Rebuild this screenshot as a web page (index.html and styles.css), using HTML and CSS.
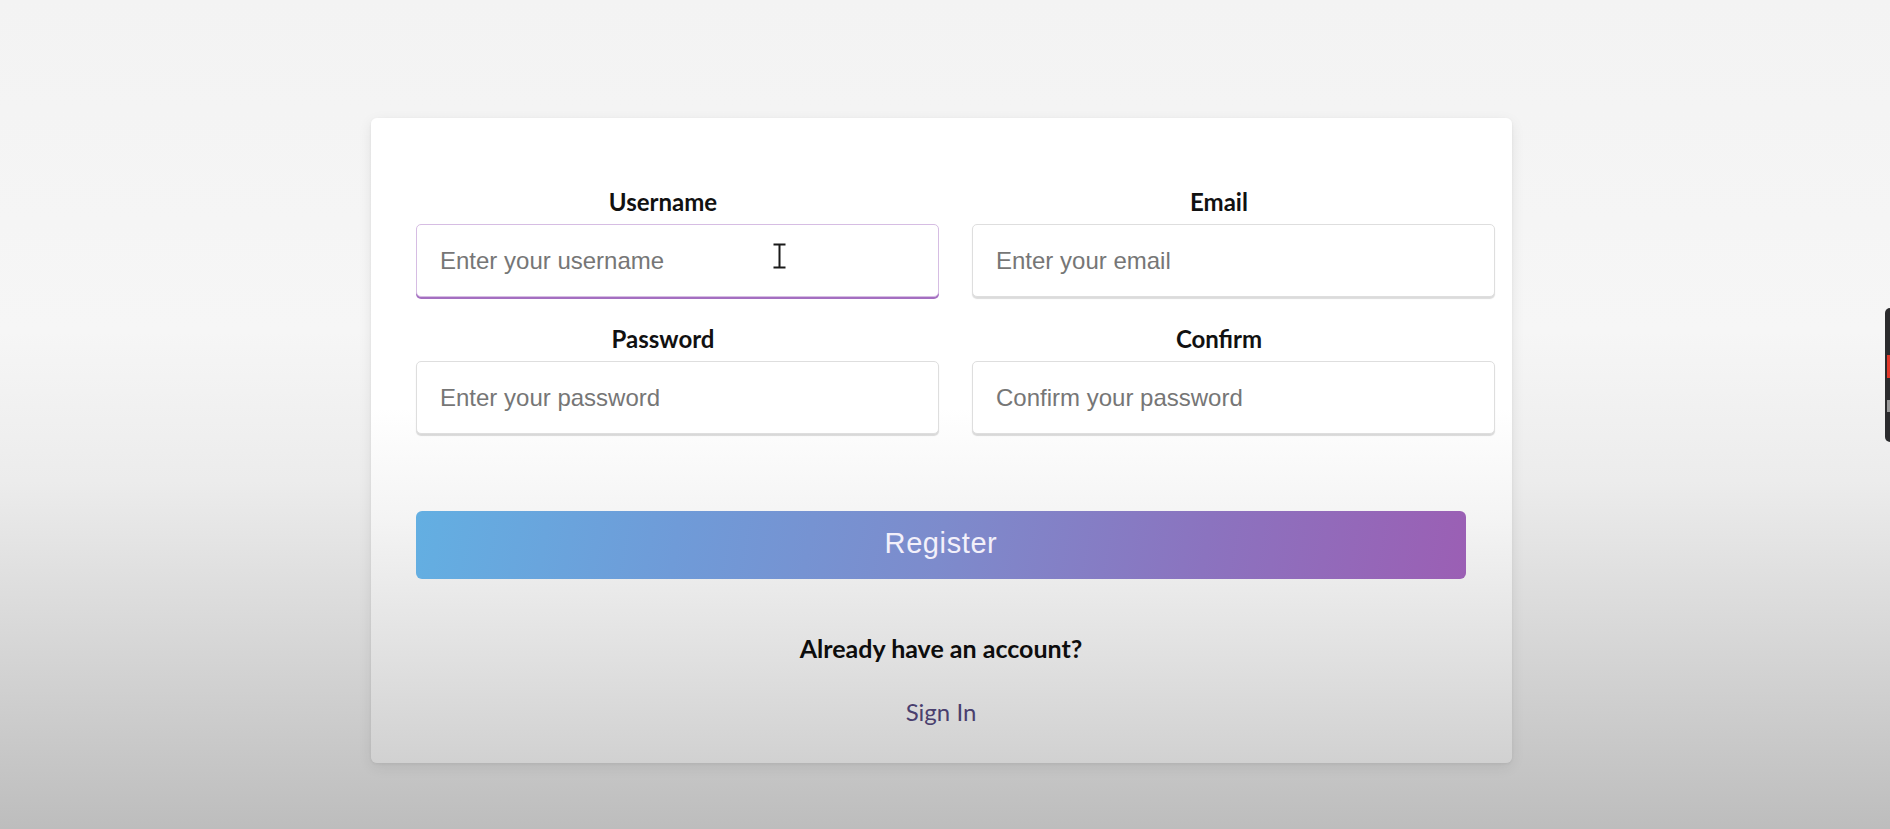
FILE: index.html
```html
<!DOCTYPE html>
<html lang="en">
<head>
<meta charset="utf-8">
<title>Register</title>
<link rel="stylesheet" href="styles.css">
</head>
<body>
<main class="page">
  <form class="card">
    <div class="grid">
      <div class="field">
        <label class="label" for="username">Username</label>
        <div class="control">
          <input id="username" class="input input-focus" type="text" placeholder="Enter your username">
          <svg class="ibeam" width="15" height="26" viewBox="0 0 15 26" aria-hidden="true">
            <path d="M1.5 1.5 H13.5 M1.5 24.5 H13.5 M7.5 1.5 V24.5" fill="none" stroke="#1a1a1a" stroke-width="2"/>
          </svg>
        </div>
      </div>
      <div class="field">
        <label class="label" for="email">Email</label>
        <div class="control">
          <input id="email" class="input" type="email" placeholder="Enter your email">
        </div>
      </div>
      <div class="field">
        <label class="label" for="password">Password</label>
        <div class="control">
          <input id="password" class="input" type="password" placeholder="Enter your password">
        </div>
      </div>
      <div class="field">
        <label class="label" for="confirm">Confirm</label>
        <div class="control">
          <input id="confirm" class="input" type="password" placeholder="Confirm your password">
        </div>
      </div>
    </div>
    <button class="register" type="button">Register</button>
    <p class="already">Already have an account?</p>
    <a class="signin" href="#">Sign In</a>
  </form>
</main>
<div class="edge-device"><span class="edge-red"></span><span class="edge-gray"></span></div>
</body>
</html>
```

FILE: styles.css
```css
html, body {
  margin: 0;
  padding: 0;
  height: 100%;
}

body {
  background: linear-gradient(to bottom, #f3f3f3 0%, #f6f6f6 40%, #ececec 58%, #d6d6d6 78%, #bdbdbd 100%);
  font-family: "Lato", "Open Sans", sans-serif;
  overflow: hidden;
}

.page {
  display: flex;
  justify-content: center;
  padding: 118px 7px 0 0;
}

.card {
  width: 1141px;
  box-sizing: border-box;
  padding: 69px 46px 36px 45px;
  border-radius: 6px;
  background: linear-gradient(to bottom, #ffffff 0%, #ffffff 45%, #f4f4f4 62%, #e2e2e2 82%, #d1d1d1 100%);
  box-shadow: 0 4px 14px rgba(0, 0, 0, 0.08), 0 1px 3px rgba(0, 0, 0, 0.06);
  display: flex;
  flex-direction: column;
  align-items: stretch;
}

.grid {
  display: grid;
  grid-template-columns: 1fr 1fr;
  column-gap: 62px;
  row-gap: 27px;
}

.field {
  display: flex;
  flex-direction: column;
}

.label {
  display: block;
  text-align: center;
  font-family: "Lato", sans-serif;
  font-weight: 700;
  font-size: 24px;
  line-height: 29px;
  color: #111;
  margin-bottom: 8px;
}

.control {
  position: relative;
  width: calc(100% + 29px);
}

.input {
  display: block;
  width: 100%;
  height: 73px;
  box-sizing: border-box;
  padding: 0 20px 0 23px;
  border: 1px solid #dedede;
  border-radius: 5px;
  background: #fff;
  box-shadow: 0 2px 1px rgba(0, 0, 0, 0.14);
  font-family: "Liberation Sans", Arial, sans-serif;
  font-size: 24px;
  color: #333;
  outline: none;
}

.input::placeholder {
  color: #767676;
}

.input-focus {
  border-color: #d6bde3;
  box-shadow: 0 2px 0 #a46fc1;
}

.ibeam {
  position: absolute;
  left: 356px;
  top: 19px;
}

.register {
  margin-top: 77px;
  height: 68px;
  border: none;
  border-radius: 6px;
  background: linear-gradient(100deg, #63afe2 0%, #6f9bd8 25%, #7d8bcc 50%, #8b73bf 75%, #9b5fb4 100%);
  color: #f3f0fa;
  font-family: "Liberation Sans", Arial, sans-serif;
  font-size: 29px;
  letter-spacing: 0.6px;
  cursor: pointer;
  padding: 0 0 4px;
}

.already {
  margin: 54px 0 0;
  text-align: center;
  font-family: "Lato", sans-serif;
  font-weight: 700;
  font-size: 25px;
  line-height: 30px;
  color: #0d0d0d;
}

.signin {
  display: block;
  margin-top: 34px;
  text-align: center;
  font-family: "Lato", sans-serif;
  font-size: 24px;
  line-height: 30px;
  color: #4a3f6e;
  text-decoration: none;
}

.edge-device {
  position: fixed;
  right: 0;
  top: 308px;
  width: 5px;
  height: 134px;
  background: #2b2b2d;
  border-radius: 6px 0 0 6px;
  display: flex;
  flex-direction: column;
  align-items: flex-end;
}

.edge-red {
  margin-top: 47px;
  width: 3px;
  height: 23px;
  background: #e2382b;
}

.edge-gray {
  margin-top: 22px;
  width: 3px;
  height: 12px;
  background: #9a9a9a;
}
```
